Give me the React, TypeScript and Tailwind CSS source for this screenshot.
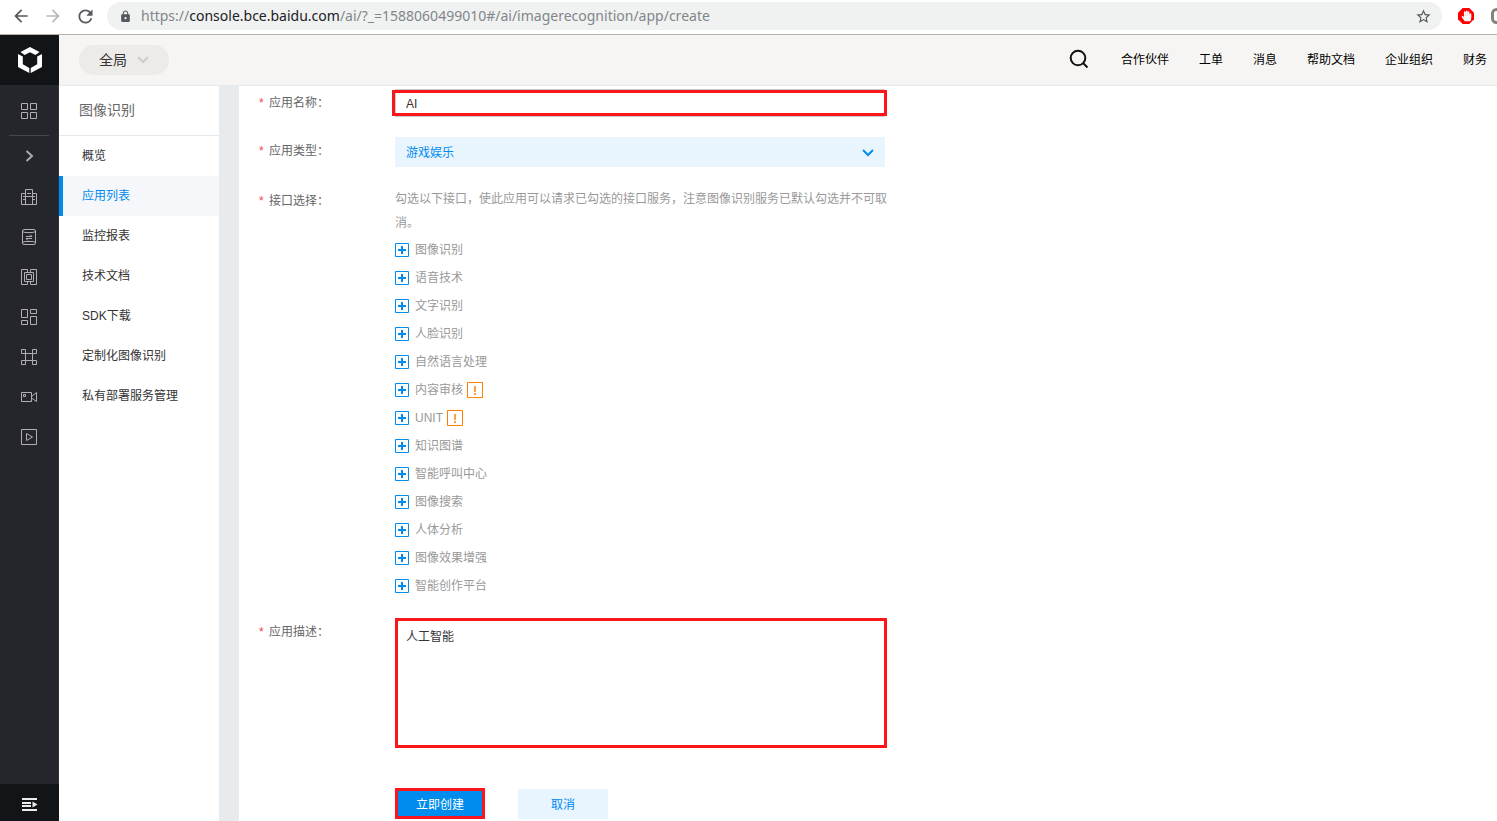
import React from "react";
import { MdArrowBack, MdArrowForward, MdLock, MdRefresh, MdStarBorder } from "react-icons/md";
import { FaHandPaper } from "react-icons/fa";

const navItems = ["合作伙伴", "工单", "消息", "帮助文档", "企业组织", "财务"];

const menuItems = ["概览", "应用列表", "监控报表", "技术文档", "SDK下载", "定制化图像识别", "私有部署服务管理"];

const services: { name: string; warn?: boolean }[] = [
  { name: "图像识别" },
  { name: "语音技术" },
  { name: "文字识别" },
  { name: "人脸识别" },
  { name: "自然语言处理" },
  { name: "内容审核", warn: true },
  { name: "UNIT", warn: true },
  { name: "知识图谱" },
  { name: "智能呼叫中心" },
  { name: "图像搜索" },
  { name: "人体分析" },
  { name: "图像效果增强" },
  { name: "智能创作平台" },
];

function RailIcon({ children }: { children: React.ReactNode }) {
  return (
    <svg width="18" height="18" viewBox="0 0 18 18" fill="none" stroke="#b3aeb2" strokeWidth="1" aria-hidden="true">
      {children}
    </svg>
  );
}

const railItems = [
  {
    label: "网络",
    icon: (
      <RailIcon>
        <path d="M5.500 16.500V1.500H12.500V16.500M5.500 5.500H1.500V16.500H16.500V5.500H12.500M7 5.500H11M7 8.500H11M3 8.500H7M3 11.500H5.500M11 8.500H15M12.500 11.500H15" />
      </RailIcon>
    ),
  },
  {
    label: "数据库",
    icon: (
      <RailIcon>
        <path d="M4 1.500H14Q15.500 1.500 15.500 3V15Q15.500 16.500 14 16.500H4Q2.500 16.500 2.500 15V3Q2.500 1.500 4 1.500ZM2.500 3.500Q4 4.500 6 4.500H12Q14 4.500 15.500 3.500M2.500 14.500Q4 13.500 6 13.500H12Q14 13.500 15.500 14.500M6 8.500H12L10 6.500M12 10.500H6L8 12.500" />
      </RailIcon>
    ),
  },
  {
    label: "计算",
    icon: (
      <RailIcon>
        <path d="M7.500 4.500V1.500H1.500V16.500H7.500V13.500M10.500 4.500V1.500H16.500V16.500H10.500V13.500" />
        <path d="M4.500 4.500H13.500V13.500H4.500ZM6.500 6.500H11.500V11.500H6.500Z" />
      </RailIcon>
    ),
  },
  {
    label: "应用",
    icon: (
      <RailIcon>
        <path d="M1.500 1.500H7.500V9.500H1.500ZM10.500 1.500H16.500V5.500H10.500ZM1.500 12.500H7.500V16.500H1.500ZM10.500 8.500H16.500V16.500H10.500Z" />
      </RailIcon>
    ),
  },
  {
    label: "集群",
    icon: (
      <RailIcon>
        <path d="M1.500 1.500H5.500V5.500H1.500ZM12.500 1.500H16.500V5.500H12.500ZM1.500 12.500H5.500V16.500H1.500ZM12.500 12.500H16.500V16.500H12.500ZM5.500 5.500V12.500M12.500 5.500V12.500M5.500 5.500H12.500M5.500 12.500H12.500" />
      </RailIcon>
    ),
  },
  {
    label: "视频",
    icon: (
      <RailIcon>
        <path d="M1.500 4.500H11.500V13.500H1.500ZM11.500 8.500L16.500 4.500V13.500L11.500 10M3.500 6.500H5.500V8.500H3.500Z" />
      </RailIcon>
    ),
  },
  {
    label: "播放",
    icon: (
      <RailIcon>
        <path d="M1.500 1.500H16.500V16.500H1.500ZM6.500 5.500L12.500 9L6.500 12.500Z" />
      </RailIcon>
    ),
  },
];

function BrowserBar() {
  return (
    <div className="flex h-[35px] shrink-0 items-center border-b border-[#b9b0a8] bg-white pb-0.5 text-[#55585c]">
      <div className="flex shrink-0 items-center gap-3 pl-[11px]">
        <button type="button" aria-label="后退"><MdArrowBack size={20} /></button>
        <button type="button" aria-label="前进" className="text-[#b9b9b9]"><MdArrowForward size={20} /></button>
        <button type="button" aria-label="刷新"><MdRefresh size={21} /></button>
      </div>
      <div className="ml-[11px] flex h-7 min-w-0 flex-1 items-center rounded-full bg-[#f0f2f1] pr-2.5 pl-3">
        <MdLock size={13} className="shrink-0" />
        <div className="ml-[9px] min-w-0 flex-1 truncate pb-0.5 font-['Noto_Sans',sans-serif] text-[14px] text-[#80868b]">
          https://<span className="text-[#202124]">console.bce.baidu.com</span>/ai/?_=1588060499010#/ai/imagerecognition/app/create
        </div>
        <button type="button" aria-label="收藏"><MdStarBorder size={17} /></button>
      </div>
      <div className="flex w-[55px] shrink-0 items-center overflow-hidden pl-4">
        <svg width="16" height="16" viewBox="0 0 16 16" className="shrink-0" aria-hidden="true">
          <path d="M4.700 0H11.300L16 4.700V11.300L11.300 16H4.700L0 11.300V4.700Z" fill="#ff0000" />
          <FaHandPaper x={3} y={2.500} size={11} color="#fff" />
        </svg>
        <svg width="14" height="16" viewBox="0 0 14 16" className="ml-[17px] shrink-0" aria-hidden="true">
          <rect x="1.500" y="1.500" width="11" height="13" rx="4" fill="none" stroke="#85827f" strokeWidth="3" />
        </svg>
      </div>
    </div>
  );
}

function Rail() {
  return (
    <nav aria-label="产品" className="flex w-[59px] shrink-0 flex-col border-r border-[#303138] bg-[#25262b]">
      <a href="#home" aria-label="首页" className="flex h-[50px] w-[59px] items-center justify-center bg-[#111518]">
        <svg width="24" height="26" viewBox="0 0 24 26" fill="#fff" aria-hidden="true">
          <path d="M12 0L21.500 5L17.500 8L12 5.200L6.500 8L2.500 5Z" />
          <path d="M0 7L4.800 9.500V17.300L11.300 21V26L0 20Z" />
          <path d="M24 7L19.200 9.500V17.300L12.700 21V26L24 20Z" />
        </svg>
      </a>
      <a href="#products" aria-label="产品总览" className="flex h-[50px] items-center justify-center pt-0.5">
        <RailIcon>
          <path d="M1.500 1.500H7.500V7.500H1.500ZM10.500 1.500H16.500V7.500H10.500ZM1.500 10.500H7.500V16.500H1.500ZM10.500 10.500H16.500V16.500H10.500Z" />
        </RailIcon>
      </a>
      <div className="mx-[9px] h-px bg-[#45464b]" />
      <button type="button" aria-label="展开" className="flex h-10 items-center justify-center pb-px">
        <svg width="18" height="18" viewBox="0 0 18 18" fill="none" stroke="#aaa9ad" strokeWidth="2" aria-hidden="true">
          <path d="M6.500 4L12 9L6.500 14" />
        </svg>
      </button>
      {railItems.map((item) => (
        <a key={item.label} href="#product" aria-label={item.label} className="flex h-10 items-center justify-center pt-0.5">
          {item.icon}
        </a>
      ))}
      <button type="button" aria-label="菜单" className="mt-auto flex h-[37px] w-[59px] items-center justify-center bg-[#111518] pt-0.5">
        <svg width="16" height="14" viewBox="0 0 16 14" aria-hidden="true">
          <path d="M0 1H15V3H0ZM0 5H9V7H0ZM0 8H9V10H0ZM0 12H15V14H0ZM10.500 4.500L15.500 7.500L10.500 10.500Z" fill="#e9edef" />
        </svg>
      </button>
    </nav>
  );
}

function Header() {
  return (
    <header className="flex h-[51px] shrink-0 items-center border-b border-[#e8e9e8] bg-[#f6f5f3] pr-2.5 pl-5">
      <button type="button" className="flex h-[30px] w-[90px] items-center rounded-full bg-[#ecebe9] pl-5 text-[14px] text-[#333]">
        全局
        <svg width="12" height="8" viewBox="0 0 12 8" className="ml-2.5" fill="none" stroke="#cfcdc9" strokeWidth="2" aria-hidden="true">
          <path d="M1 1L6 6L11 1" />
        </svg>
      </button>
      <button type="button" aria-label="搜索" className="ml-auto pb-0.5">
        <svg width="20" height="20" viewBox="0 0 20 20" fill="none" stroke="#111" strokeWidth="2" aria-hidden="true">
          <circle cx="9" cy="9" r="7.300" />
          <path d="M14 14L18.500 18.500" />
        </svg>
      </button>
      <nav aria-label="导航" className="ml-8 flex gap-[30px] text-[12px] text-black">
        {navItems.map((item) => (
          <a key={item} href="#nav">{item}</a>
        ))}
      </nav>
    </header>
  );
}

function SideMenu() {
  return (
    <aside className="w-40 shrink-0 bg-white">
      <h2 className="flex h-[50px] items-center border-b border-[#e8e9eb] pl-5 text-[14px] text-[#666]">图像识别</h2>
      <ul className="text-[12px]">
        {menuItems.map((item, i) => (
          <li key={item}>
            <a
              href="#menu"
              className={
                i === 1
                  ? "flex h-10 items-center border-l-4 border-[#008bee] bg-[#f5f7fb] pl-[19px] text-[#008bee]"
                  : "flex h-10 items-center border-l-4 border-transparent pl-[19px] text-[#333]"
              }
            >
              {item}
            </a>
          </li>
        ))}
      </ul>
    </aside>
  );
}

function Label({ htmlFor, children }: { htmlFor?: string; children: string }) {
  const content = (
    <>
      <span className="w-2.5 text-[#f04848]">*</span>
      {children}：
    </>
  );
  const classes = "flex w-[136px] shrink-0 pt-0.5 leading-6 text-[#666]";
  return htmlFor ? (
    <label htmlFor={htmlFor} className={classes}>{content}</label>
  ) : (
    <div className={classes}>{content}</div>
  );
}

function AppForm() {
  return (
    <form className="min-w-0 flex-1 bg-white pt-[3px] pb-0.5 pl-5 text-[12px]" onSubmit={(e) => e.preventDefault()}>
      <div className="flex">
        <Label htmlFor="app-name">应用名称</Label>
        <div className="relative w-[490px]">
          <input id="app-name" defaultValue="AI" className="block h-7 w-full border border-[#ccc] px-2.5 pt-0.5 text-[#333] outline-none" />
          <div className="pointer-events-none absolute inset-y-px -right-0.5 -left-[3px] border-3 border-[#fb151d]" />
        </div>
      </div>

      <div className="mt-5 flex">
        <Label htmlFor="app-type">应用类型</Label>
        <div className="relative w-[490px]">
          <select id="app-type" className="block h-[30px] w-full appearance-none bg-[#e8f4fe] px-[11px] pt-0.5 text-[#008bee] outline-none">
            <option>游戏娱乐</option>
          </select>
          <svg width="12" height="8" viewBox="0 0 12 8" className="pointer-events-none absolute top-3 right-[11px]" fill="none" stroke="#008bee" strokeWidth="2" aria-hidden="true">
            <path d="M1 1L6 6L11 1" />
          </svg>
        </div>
      </div>

      <div className="mt-5 flex">
        <Label>接口选择</Label>
        <div className="w-[495px] text-[#999]">
          <p className="leading-6">勾选以下接口，使此应用可以请求已勾选的接口服务，注意图像识别服务已默认勾选并不可取消。</p>
          <ul className="pt-px">
            {services.map((service) => (
              <li key={service.name} className="flex h-7 items-center">
                <button type="button" aria-expanded="false" className="flex items-center gap-1.5">
                  <svg width="14" height="14" viewBox="0 0 14 14" fill="none" stroke="#008bee" aria-hidden="true">
                    <path d="M.5 .5H13.500V13.500H.5Z" />
                    <path d="M3 7H11M7 3V11" strokeWidth="2" />
                  </svg>
                  {service.name}
                </button>
                {service.warn && (
                  <svg width="16" height="16" viewBox="0 0 16 16" className="ml-1" fill="none" stroke="#ff8000" aria-label="提示">
                    <path d="M.5 .5H15.500V15.500H.5Z" />
                    <path d="M8 4V10M8 11V13" strokeWidth="1.500" />
                  </svg>
                )}
              </li>
            ))}
          </ul>
        </div>
      </div>

      <div className="mt-[18px] flex">
        <Label htmlFor="app-desc">应用描述</Label>
        <textarea
          id="app-desc"
          defaultValue="人工智能"
          className="block h-[130px] w-[492px] resize-none border-3 border-[#fb151d] px-2 py-[7px] leading-[18px] text-[#333] outline-none"
        />
      </div>

      <div className="mt-10 flex gap-[33px] pl-[136px]">
        <button type="submit" className="h-[31px] w-[90px] border-3 border-[#fb151d] bg-[#008bee] pt-0.5 text-white">立即创建</button>
        <button type="button" className="mt-px h-[30px] w-[90px] bg-[#e8f4fe] pt-0.5 text-[#008bee]">取消</button>
      </div>
    </form>
  );
}

export default function App() {
  return (
    <div className="flex min-h-screen flex-col overflow-hidden bg-white font-['Liberation_Sans','Noto_Sans_CJK_SC',sans-serif]">
      <BrowserBar />
      <div className="flex flex-1">
        <Rail />
        <div className="flex min-w-0 flex-1 flex-col">
          <Header />
          <main className="flex flex-1">
            <SideMenu />
            <div className="w-5 shrink-0 bg-[#e7ebee]" />
            <AppForm />
          </main>
        </div>
      </div>
    </div>
  );
}
